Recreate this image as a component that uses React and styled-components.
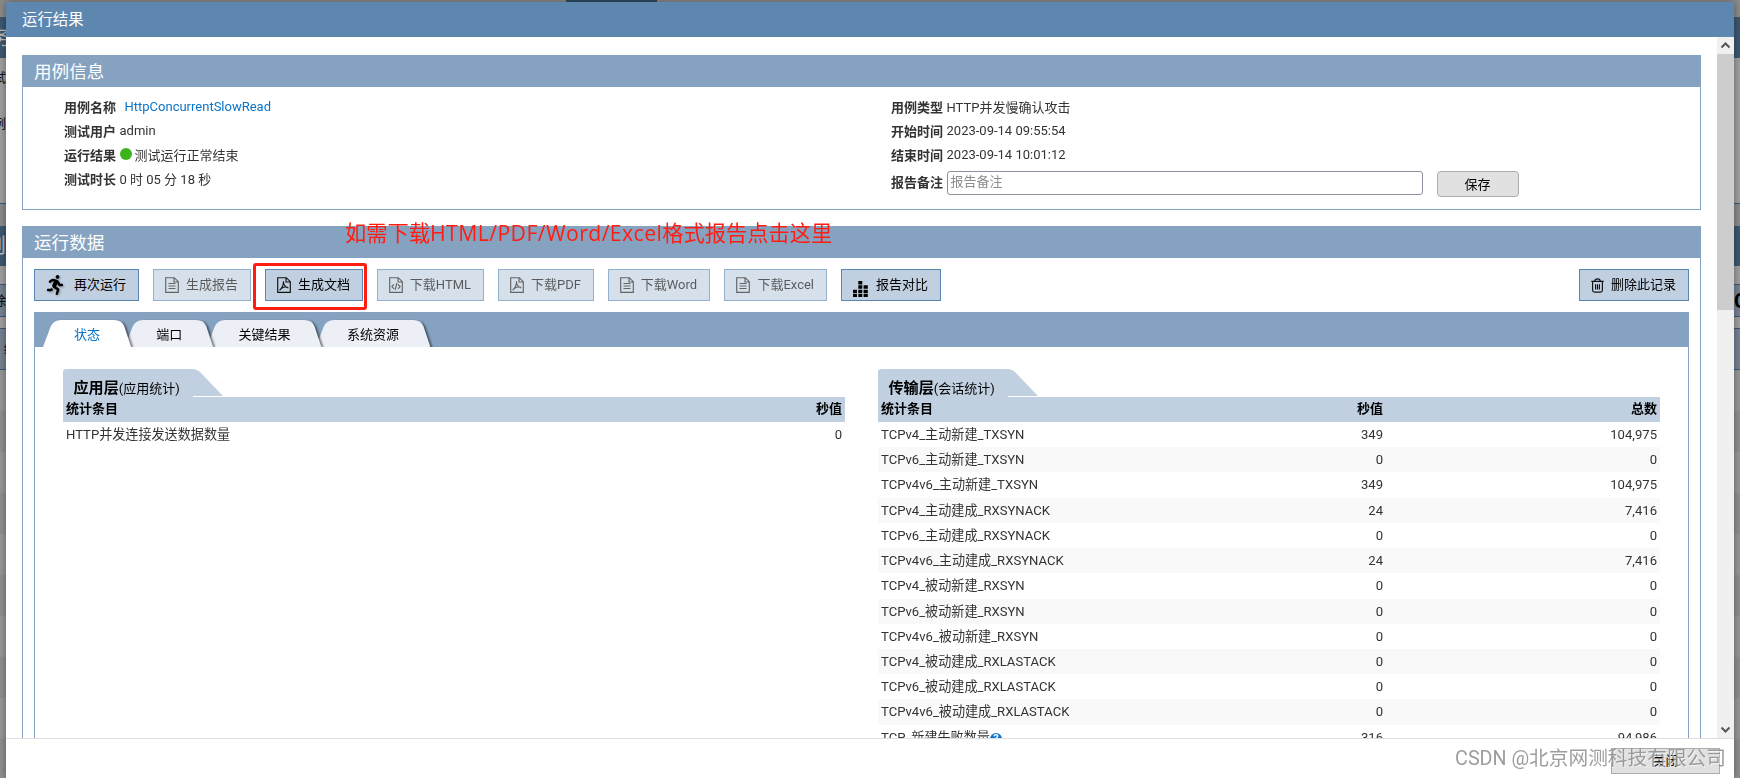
import styled, { createGlobalStyle, css } from "styled-components";
import { FaRunning } from "react-icons/fa";

const caseInfo = {
  name: "HttpConcurrentSlowRead",
  user: "admin",
  result: "测试运行正常结束",
  duration: "0 时 05 分 18 秒",
  type: "HTTP并发慢确认攻击",
  start: "2023-09-14 09:55:54",
  end: "2023-09-14 10:01:12",
};

const actions = [
  { label: "再次运行", icon: "run", width: 105 },
  { label: "生成报告", icon: "doc", width: 98, disabled: true },
  { label: "生成文档", icon: "pdf", width: 98, marked: true },
  { label: "下载HTML", icon: "html", width: 107, disabled: true },
  { label: "下载PDF", icon: "pdf", width: 96, disabled: true },
  { label: "下载Word", icon: "doc", width: 102, disabled: true },
  { label: "下载Excel", icon: "doc", width: 103, disabled: true },
  { label: "报告对比", icon: "bars", width: 100 },
];

const tabs = ["状态", "端口", "关键结果", "系统资源"];

const appRows = [["HTTP并发连接发送数据数量", "0"]];

const sessionRows = [
  ["TCPv4_主动新建_TXSYN", "349", "104,975"],
  ["TCPv6_主动新建_TXSYN", "0", "0"],
  ["TCPv4v6_主动新建_TXSYN", "349", "104,975"],
  ["TCPv4_主动建成_RXSYNACK", "24", "7,416"],
  ["TCPv6_主动建成_RXSYNACK", "0", "0"],
  ["TCPv4v6_主动建成_RXSYNACK", "24", "7,416"],
  ["TCPv4_被动新建_RXSYN", "0", "0"],
  ["TCPv6_被动新建_RXSYN", "0", "0"],
  ["TCPv4v6_被动新建_RXSYN", "0", "0"],
  ["TCPv4_被动建成_RXLASTACK", "0", "0"],
  ["TCPv6_被动建成_RXLASTACK", "0", "0"],
  ["TCPv4v6_被动建成_RXLASTACK", "0", "0"],
  ["TCP_新建失败数量", "316", "94,986", true],
];

export default function App() {
  return (
    <>
      <GlobalStyle />
      <Backdrop>
        <BackPage />
        <BackPage right />
      </Backdrop>
      <Modal>
        <ModalHeader>运行结果</ModalHeader>
        <ModalBody>
          <Content>
            <CaseInfo />
            <RunData />
          </Content>
          <ScrollBar />
        </ModalBody>
        <ModalFooter>
          <CloseButton>关闭</CloseButton>
        </ModalFooter>
      </Modal>
      <Watermark>CSDN @北京网测科技有限公司</Watermark>
    </>
  );
}

function BackPage({ right }) {
  return (
    <BackColumn>
      <BackGap height={17} />
      <BackTitle height={41}>{!right && <BackText size={20} shift={-9}>务</BackText>}</BackTitle>
      <BackCard height={146}>
        {!right && (
          <>
            <BackText size={13} shift={-7} top={10}>试</BackText>
            <BackText size={13} shift={-7} top={26}>例</BackText>
          </>
        )}
      </BackCard>
      <BackGap height={22} />
      <BackTitle height={40}>{!right && <BackText size={20} shift={-14}>则</BackText>}</BackTitle>
      <BackCard height={18} plain />
      <BackButton height={33}>
        {right ? <BackText size={20} bold>C</BackText> : <BackText size={13} shift={-7}>除</BackText>}
      </BackButton>
      <BackCard height={11} plain />
      <BackButton height={42}>{!right && <BackText size={13} shift={4}>结</BackText>}</BackButton>
      <BackRows />
    </BackColumn>
  );
}

function CaseInfo() {
  return (
    <Panel>
      <PanelTitle>用例信息</PanelTitle>
      <InfoGrid>
        <InfoColumn width={827}>
          <InfoRow>
            <Label>用例名称</Label>
            <CaseLink>{caseInfo.name}</CaseLink>
          </InfoRow>
          <InfoRow><Label>测试用户</Label>{caseInfo.user}</InfoRow>
          <InfoRow><Label>运行结果</Label><StatusDot />{caseInfo.result}</InfoRow>
          <InfoRow><Label>测试时长</Label>{caseInfo.duration}</InfoRow>
        </InfoColumn>
        <InfoColumn>
          <InfoRow><Label>用例类型</Label>{caseInfo.type}</InfoRow>
          <InfoRow><Label>开始时间</Label>{caseInfo.start}</InfoRow>
          <InfoRow><Label>结束时间</Label>{caseInfo.end}</InfoRow>
          <RemarkRow>
            <Label>报告备注</Label>
            <RemarkInput placeholder="报告备注" />
            <SaveButton>保存</SaveButton>
          </RemarkRow>
        </InfoColumn>
      </InfoGrid>
    </Panel>
  );
}

function RunData() {
  return (
    <DataPanel>
      <PanelTitle>
        运行数据
        <Note>如需下载<span>HTML/PDF/Word/Excel</span>格式报告点击这里</Note>
      </PanelTitle>
      <Toolbar>
        {actions.map((action) => (
          <ActionButton key={action.label} width={action.width} off={action.disabled}>
            <Icon type={action.icon} />
            <span>{action.label}</span>
            {action.marked && <Marker />}
          </ActionButton>
        ))}
        <DeleteButton width={110}>
          <Icon type="trash" />
          <span>删除此记录</span>
        </DeleteButton>
      </Toolbar>
      <TabPanel>
        <TabBar>
          {tabs.map((tab, index) => (
            <Tab key={tab} label={tab} active={index === 0} order={tabs.length - index} />
          ))}
        </TabBar>
        <Sections>
          <StatTable title="应用层" note="(应用统计)" heads={["统计条目", "秒值"]} rows={appRows} />
          <StatTable title="传输层" note="(会话统计)" heads={["统计条目", "秒值", "总数"]} rows={sessionRows} />
        </Sections>
      </TabPanel>
    </DataPanel>
  );
}

function Tab({ label, active, order }) {
  const width = label.length * 13.1 + 62;
  return (
    <TabItem width={width} active={active} order={order}>
      <TabShape width={width} height="27" viewBox={`0 0 ${width} 27`}>
        <path
          d={`M0 27 L7.5 7 Q10.5 0 18 0 H${width - 17} Q${width - 9.5} 0 ${width - 7} 6 L${width} 27 Z`}
          fill={active ? "#ffffff" : "#eceff5"}
        />
      </TabShape>
      <TabLabel>{label}</TabLabel>
    </TabItem>
  );
}

function StatTable({ title, note, heads, rows }) {
  return (
    <Section>
      <SectionHead>
        <SectionShape width="160" height="28" viewBox="0 0 160 28">
          <path d="M0 28 V3 Q0 0 3 0 H129 Q134 0 138 4 L160 27 H130 V28 Z" fill="#c0d0e1" />
        </SectionShape>
        <SectionTitle>
          <b>{title}</b>
          {note}
        </SectionTitle>
      </SectionHead>
      <HeadRow columns={heads.length}>
        {heads.map((head) => <Cell key={head}>{head}</Cell>)}
      </HeadRow>
      {rows.map(([name, second, total, help]) => (
        <Row key={name} columns={heads.length}>
          <Cell>{name}{help && <Help>?</Help>}</Cell>
          <Cell>{second}</Cell>
          {total && <Cell>{total}</Cell>}
        </Row>
      ))}
    </Section>
  );
}

function ScrollBar() {
  return (
    <Track>
      <Arrow viewBox="0 0 17 17"><path d="M4.5 10.5 L8.5 6.5 L12.5 10.5" /></Arrow>
      <Thumb />
      <Arrow viewBox="0 0 17 17"><path d="M4.5 6.5 L8.5 10.5 L12.5 6.5" /></Arrow>
    </Track>
  );
}

function Icon({ type }) {
  if (type === "run") {
    return <RunIcon />;
  }
  if (type === "bars") {
    return (
      <BarsIcon width="15" height="16" viewBox="0 0 15 16">
        <path d="M0 8.7h4v3.3H0z M0 12.8h4v3.2H0z M5.3 0h4v3.4h-4z M5.3 4.3h4v3.4h-4z M5.3 8.7h4v3.3h-4z M5.3 12.8h4v3.2h-4z M10.6 4.3h4.2v3.4h-4.2z M10.6 8.7h4.2v3.3h-4.2z M10.6 12.8h4.2v3.2h-4.2z" />
      </BarsIcon>
    );
  }
  if (type === "trash") {
    return (
      <TrashIcon width="13" height="15" viewBox="0 0 13 15">
        <path d="M.3 3.4h12.4 M3.6 3.2C3.8 1.4 4.8.8 6.5.8s2.7.6 2.9 2.4 M1.6 3.6v8.6q0 1.9 1.9 1.9h6q1.9 0 1.9-1.9V3.6 M4.6 6.2v5.2 M6.5 6.2v5.2 M8.4 6.2v5.2" />
      </TrashIcon>
    );
  }
  return (
    <FileIcon width="14" height="16" viewBox="0 0 14 16">
      <path d="M.7.7h8.6l4 4v10.6H.7z M9 .7v4.3h4.3" />
      {type === "doc" && <path d="M3.5 6.5h7 M3.5 9h7 M3.5 11.5h7" />}
      {type === "pdf" && <path d="M2.6 13.2C4.6 11.5 6.6 8 6.5 4.3 M6.5 5.5C7 8.2 8.5 10.3 11.4 10.9 M4.7 11.2C6.5 10.1 8.5 9.7 10.8 10.2" />}
      {type === "html" && <path d="M5 7.3L2.9 9.6L5 11.9 M9 7.3L11.1 9.6L9 11.9 M7.9 6.2L6.1 13" />}
    </FileIcon>
  );
}

const GlobalStyle = createGlobalStyle`
  * {
    box-sizing: border-box;
  }

  body {
    margin: 0;
    overflow: hidden;
    font-family: Roboto, "Noto Sans CJK SC", sans-serif;
    font-size: 13px;
    color: #333;
  }

  button, input {
    font-family: inherit;
    font-size: 13px;
  }
`;

const Backdrop = styled.div`
  height: 778px;
  display: flex;
  justify-content: space-between;
  background: linear-gradient(90deg, #8b8b8b 566px, #2f4a64 566px, #2f4a64 657px, #8b8b8b 657px);
`;

const BackColumn = styled.div`
  width: 6px;
  height: 778px;
  display: flex;
  flex-direction: column;
  overflow: hidden;
`;

const BackGap = styled.div`
  height: ${({ height }) => height}px;
  flex: none;
  background: #8b8b8b;
`;

const BackTitle = styled.div`
  height: ${({ height }) => height}px;
  flex: none;
  display: flex;
  align-items: center;
  background: #3c5872;
  color: #c0c0c0;
`;

const BackCard = styled.div`
  height: ${({ height }) => height}px;
  flex: none;
  background: #a0a0a0;
  color: #111;
  border-bottom: ${({ plain }) => (plain ? "none" : "1px solid #3a5a78")};
`;

const BackButton = styled.div`
  height: ${({ height }) => height}px;
  flex: none;
  display: flex;
  align-items: center;
  background: #788292;
  border-top: 1px solid #3a5a78;
  border-bottom: 1px solid #3a5a78;
  color: #000;
`;

const BackText = styled.div`
  width: 20px;
  flex: none;
  font-size: ${({ size }) => size}px;
  font-weight: ${({ bold }) => (bold ? 700 : 400)};
  line-height: 20px;
  margin-left: ${({ shift = 0 }) => shift}px;
  padding-top: ${({ top = 0 }) => top}px;
`;

const BackRows = styled.div`
  flex: 1;
  background: repeating-linear-gradient(#989898 0 41px, #909090 41px 82px);
`;

const Modal = styled.div`
  position: fixed;
  top: 2px;
  left: 6px;
  right: 6px;
  bottom: 0;
  display: flex;
  flex-direction: column;
  background: #fff;
  box-shadow: 0 0 8px rgba(0, 0, 0, 0.4);
`;

const ModalHeader = styled.div`
  height: 35px;
  flex: none;
  padding-left: 16px;
  line-height: 36px;
  font-size: 15.4px;
  color: #fff;
  background: #5d87af;
`;

const ModalBody = styled.div`
  height: 701px;
  flex: none;
  display: flex;
  overflow: hidden;
`;

const Content = styled.div`
  flex: 1;
  display: flex;
  flex-direction: column;
  gap: 16px;
  padding: 18px 16px 0;
  overflow: hidden;
`;

const ModalFooter = styled.div`
  flex: 1;
  display: flex;
  justify-content: flex-end;
  align-items: flex-start;
  padding: 9px 14px 0 0;
  border-top: 1px solid #dedede;
`;

const Panel = styled.section`
  height: 155px;
  flex: none;
  border: 1px solid #86a2c1;
`;

const DataPanel = styled(Panel)`
  height: 1400px;
`;

const PanelTitle = styled.div`
  position: relative;
  height: 31px;
  padding-left: 11px;
  line-height: 32px;
  font-size: 17.6px;
  color: #fff;
  background: #86a2c1;
`;

const Note = styled.div`
  position: absolute;
  left: 322px;
  top: -10px;
  line-height: 32px;
  font-family: "Open Sans", "Noto Sans CJK SC", sans-serif;
  font-size: 21.25px;
  color: #ff1d12;
  white-space: nowrap;

  span {
    letter-spacing: 0.4px;
  }
`;

const InfoGrid = styled.div`
  display: flex;
  padding: 7px 0 0 41px;
`;

const InfoColumn = styled.div`
  width: ${({ width }) => (width ? `${width}px` : "auto")};
`;

const InfoRow = styled.div`
  height: 24px;
  display: flex;
  align-items: center;
`;

const Label = styled.b`
  margin-right: 3.5px;
  flex: none;
`;

const RemarkRow = styled(InfoRow)`
  height: 34px;

  ${Label} {
    padding-bottom: 4px;
  }
`;

const CaseLink = styled.a`
  margin-left: 5px;
  color: #0a74c9;
`;

const StatusDot = styled.i`
  width: 12px;
  height: 12px;
  margin-right: 3px;
  border-radius: 50%;
  background: #3cb51c;
`;

const RemarkInput = styled.input`
  width: 476px;
  height: 24px;
  padding: 0 3px 3px;
  margin: 0 14px 0 0;
  border: 1px solid #8f8f9d;
  border-radius: 3px;

  &::placeholder {
    color: #8c8c8c;
  }
`;

const PlainButton = styled.button`
  height: 26px;
  padding: 0;
  color: #000;
  background: #e1e1e1;
  border: 1px solid #adadad;
`;

const SaveButton = styled(PlainButton)`
  width: 82px;
  margin-top: 2px;
  padding-bottom: 1px;
  border-radius: 4px;
`;

const CloseButton = styled(PlainButton)`
  width: 109px;
  padding-bottom: 3px;
`;

const Toolbar = styled.div`
  display: flex;
  gap: 14px;
  padding: 11px 11px;
`;

const ActionButton = styled.button`
  position: relative;
  width: ${({ width }) => width}px;
  height: 32px;
  flex: none;
  display: flex;
  align-items: center;
  justify-content: space-between;
  padding: 0 12px 0 11px;
  color: #000;
  white-space: nowrap;
  background: #c0d0e1;
  border: 1px solid #5a86b2;
  opacity: ${({ off }) => (off ? 0.65 : 1)};

  span {
    margin-top: -4px;
  }
`;

const DeleteButton = styled(ActionButton)`
  margin-left: auto;
`;

const Marker = styled.div`
  position: absolute;
  left: -13px;
  top: -7px;
  width: 114px;
  height: 47px;
  border: 3px solid #ff1d12;
  border-radius: 3px;
`;

const RunIcon = styled(FaRunning)`
  width: 18px;
  height: 20px;
  filter: drop-shadow(1px 1px 1px rgba(0, 0, 0, 0.3));
`;

const lineIcon = css`
  fill: none;
  stroke: #111;
  stroke-width: 1.15;
`;

const FileIcon = styled.svg`
  ${lineIcon}
`;

const TrashIcon = styled.svg`
  ${lineIcon}
`;

const BarsIcon = styled.svg`
  margin-top: 7px;
`;

const TabPanel = styled.div`
  height: 1200px;
  margin: 0 11px;
  border: 1px solid #86a2c1;
  border-top: 0;
`;

const TabBar = styled.div`
  height: 35px;
  display: flex;
  align-items: flex-end;
  padding-left: 8px;
  overflow: hidden;
  background: #86a2c1;
`;

const TabItem = styled.div`
  position: relative;
  z-index: ${({ order }) => order};
  width: ${({ width }) => width}px;
  height: 27px;
  flex: none;
  line-height: 29px;
  text-align: center;
  color: ${({ active }) => (active ? "#0a74c9" : "#000")};

  & + & {
    margin-left: -6px;
  }
`;

const TabShape = styled.svg`
  position: absolute;
  left: 0;
  top: 0;
  filter: drop-shadow(2px 1px 1px rgba(0, 0, 0, 0.55));
`;

const TabLabel = styled.span`
  position: relative;
`;

const Sections = styled.div`
  display: grid;
  grid-template-columns: 782px 782px;
  gap: 33px;
  padding: 22px 0 0 28px;
`;

const Section = styled.div`
  color: #333;
`;

const SectionHead = styled.div`
  position: relative;
  height: 28px;
`;

const SectionShape = styled.svg`
  position: absolute;
  left: 0;
  top: 0;
`;

const SectionTitle = styled.div`
  position: relative;
  padding: 0 0 0 10.5px;
  line-height: 38px;
  color: #000;

  b {
    font-size: 15.1px;
  }
`;

const rowGrid = css`
  display: grid;
  grid-template-columns: ${({ columns }) => (columns === 3 ? "234px 274px 274px" : "391px 391px")};
`;

const HeadRow = styled.div`
  ${rowGrid}
  height: 25px;
  line-height: 24px;
  font-weight: 700;
  color: #000;
  background: #c0d0e1;
`;

const Row = styled.div`
  ${rowGrid}
  height: 25.23px;
  line-height: 25px;
  font-size: 13.1px;

  &:nth-child(even) {
    background: #f9f9f9;
  }
`;

const Cell = styled.div`
  padding: 0 3px;
  white-space: nowrap;
  text-align: right;

  &:first-child {
    text-align: left;
  }
`;

const Help = styled.span`
  display: inline-block;
  width: 12px;
  height: 12px;
  border-radius: 50%;
  font-size: 11px;
  font-weight: 700;
  line-height: 12px;
  text-align: center;
  color: #fff;
  background: #0a74c9;
`;

const Track = styled.div`
  width: 17px;
  display: flex;
  flex-direction: column;
  background: #f0f0f0;
`;

const Thumb = styled.div`
  height: 256px;
  margin-bottom: auto;
  background: #cdcdcd;
`;

const Arrow = styled.svg`
  width: 17px;
  height: 17px;
  flex: none;
  fill: none;
  stroke: #555;
  stroke-width: 2;
`;

const Watermark = styled.div`
  position: fixed;
  right: 14px;
  bottom: 4px;
  line-height: 30px;
  font-size: 19.7px;
  color: rgba(140, 140, 140, 0.85);
  text-shadow: 1px 1px 0 rgba(255, 255, 255, 0.6);
  white-space: nowrap;
`;
